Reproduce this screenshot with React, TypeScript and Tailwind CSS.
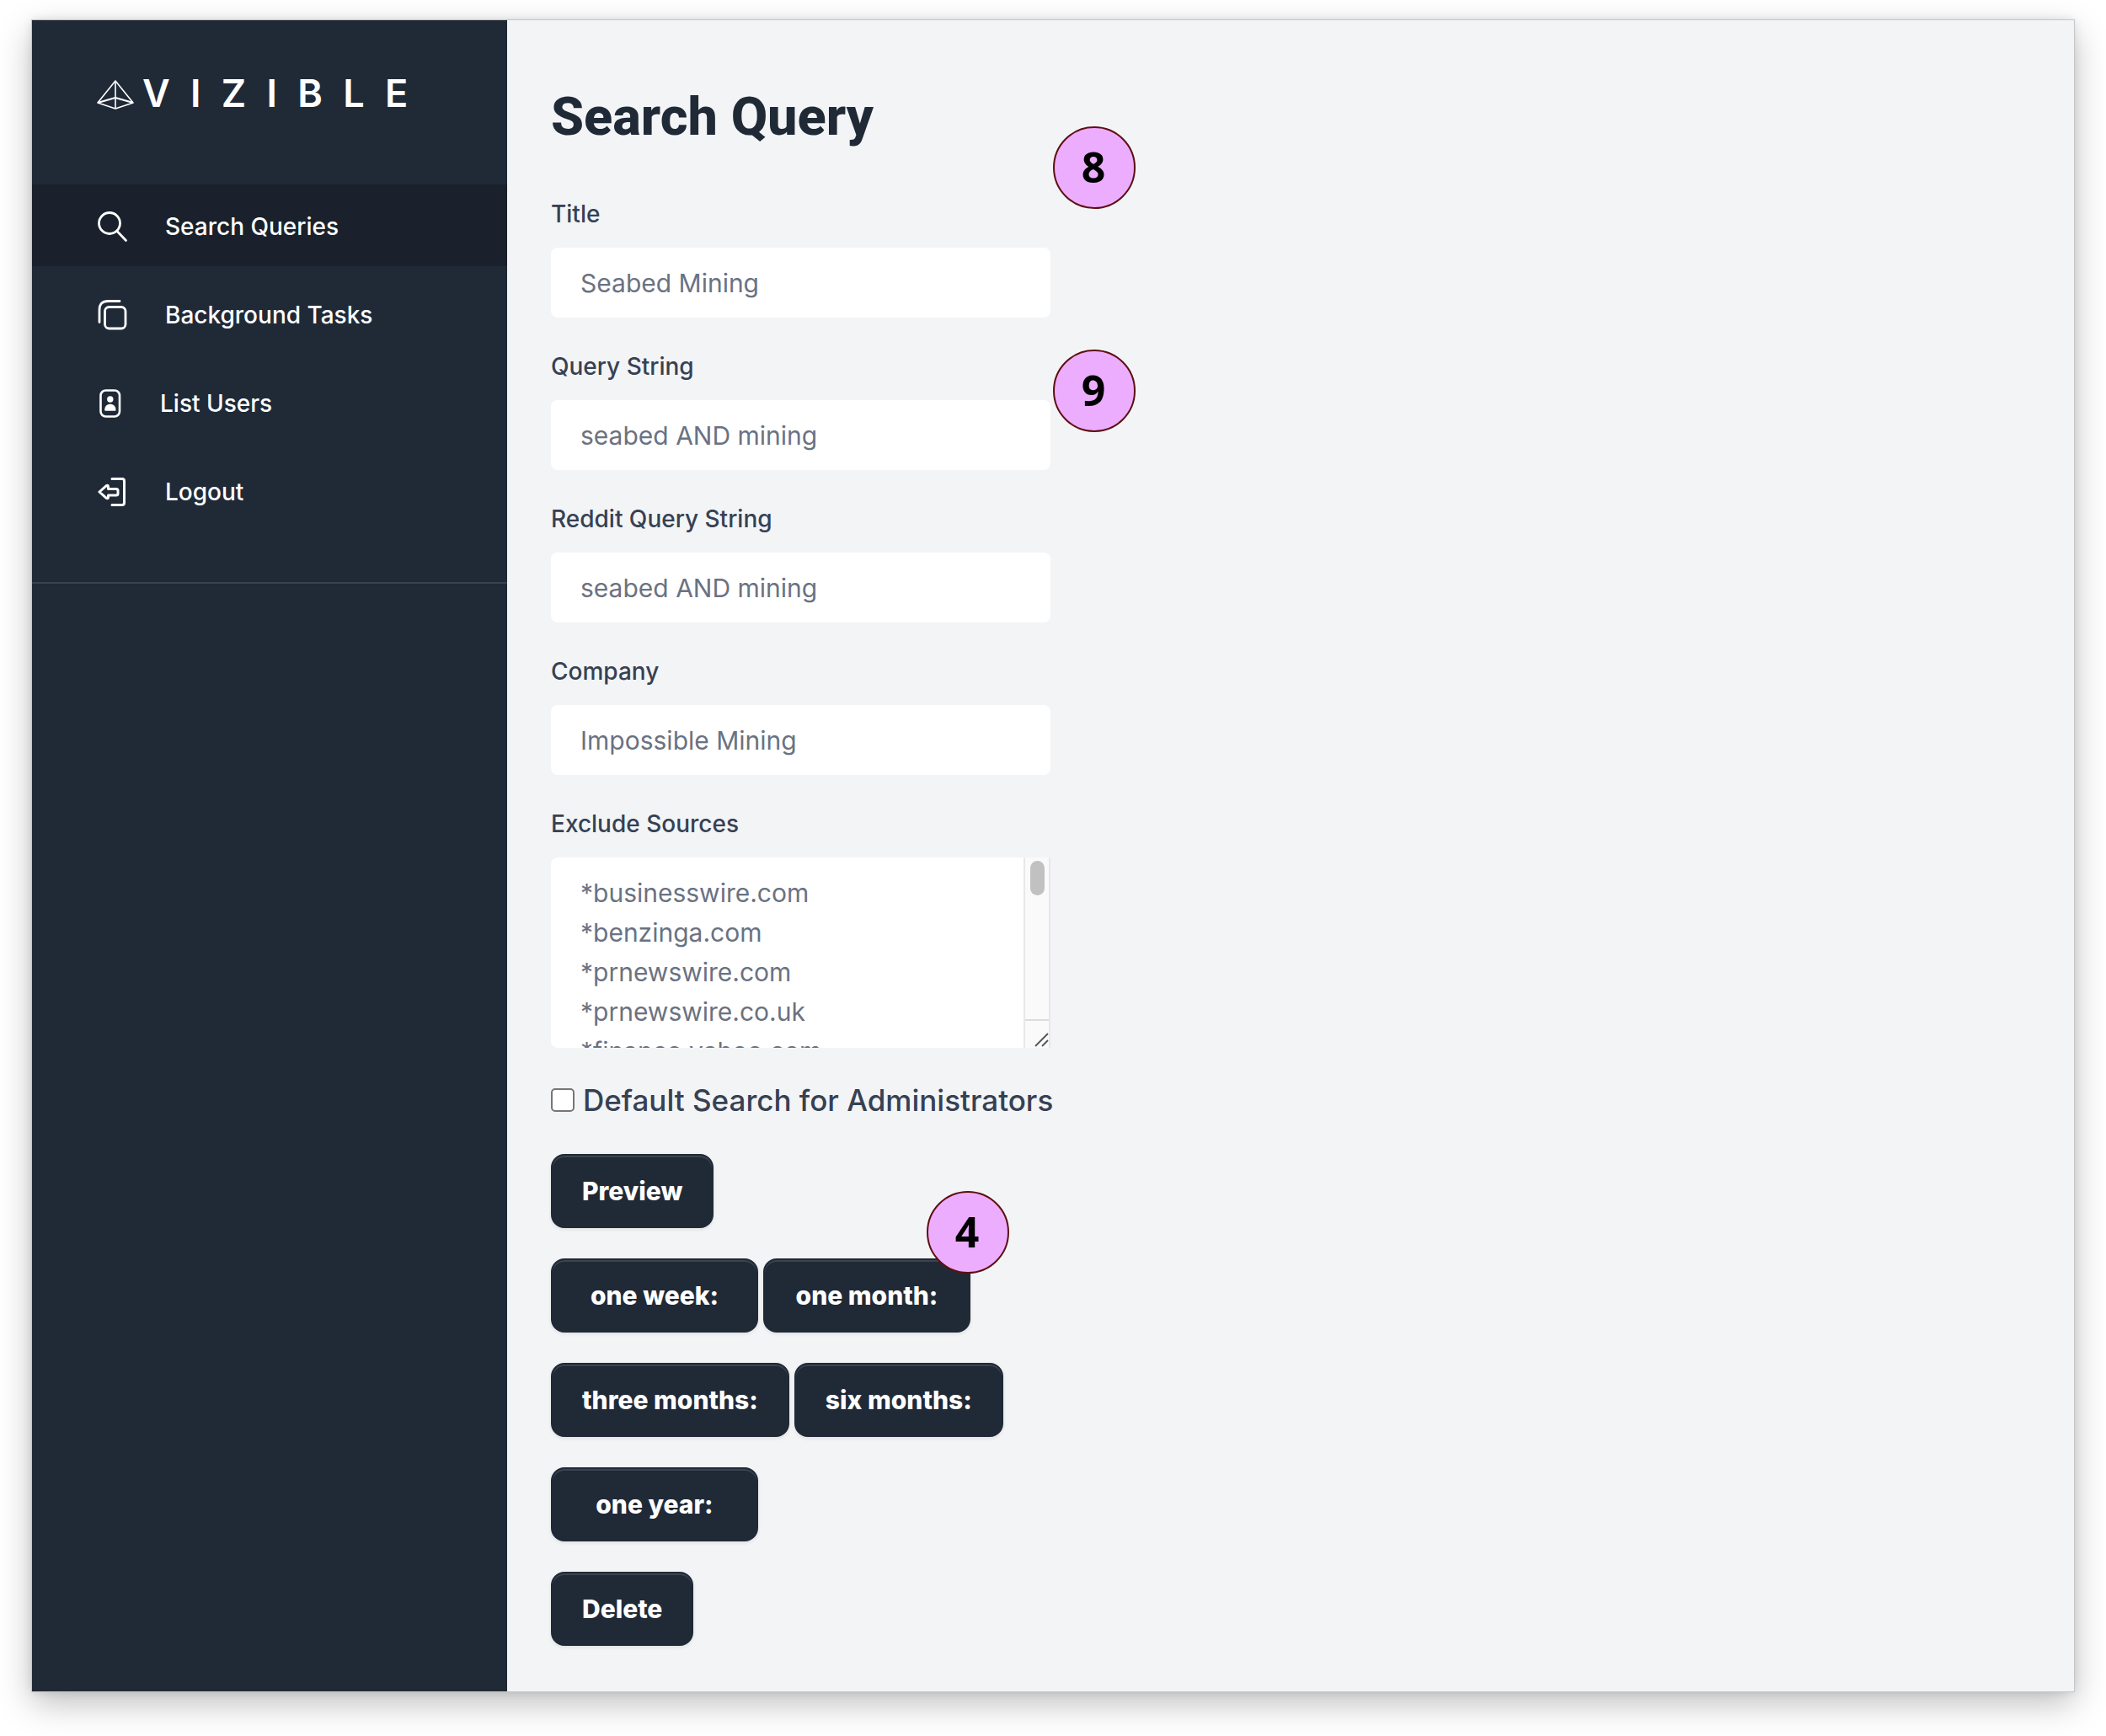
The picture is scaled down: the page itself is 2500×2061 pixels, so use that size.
import type { ReactNode } from "react";

function LogoMark() {
  return (
    <svg width="44" height="36" viewBox="0 0 44 36" fill="none" stroke="#fff" strokeWidth="1.6" strokeLinejoin="round" aria-hidden="true">
      <path d="M22 2 L1 28 L22 35 L43 28 Z" />
      <path d="M22 2 V35" />
      <path d="M1 28 L22 22 L43 28" strokeWidth="2" />
    </svg>
  );
}

function SearchIcon() {
  return (
    <svg width="36" height="38" viewBox="0 0 36 38" fill="none" stroke="#fff" strokeWidth="2.8" strokeLinecap="round" aria-hidden="true">
      <circle cx="14" cy="15" r="12.500" />
      <path d="M23 24.500 L33.500 35.500" />
    </svg>
  );
}

function TasksIcon() {
  return (
    <svg width="36" height="38" viewBox="0 0 36 38" fill="none" stroke="#fff" strokeWidth="2.8" strokeLinecap="round" aria-hidden="true">
      <path d="M2 27.5 V13 Q2 2.5 12.5 2.5 H26" />
      <rect x="8.500" y="9.500" width="24.500" height="25.500" rx="5" />
    </svg>
  );
}

function UsersIcon() {
  return (
    <svg width="30" height="36" viewBox="0 0 30 36" fill="none" aria-hidden="true">
      <rect x="3.500" y="2.500" width="22.500" height="31" rx="6" stroke="#fff" strokeWidth="2.6" />
      <circle cx="14.800" cy="13" r="3.700" fill="#fff" />
      <path d="M8.200 26 C8.200 21 11.200 18.800 14.800 18.800 C18.500 18.800 21.500 21 21.500 26 Q21.500 26.800 20.500 26.800 H9.200 Q8.200 26.800 8.200 26 Z" fill="#fff" />
    </svg>
  );
}

function LogoutIcon() {
  return (
    <svg width="36" height="36" viewBox="0 0 36 36" fill="none" stroke="#fff" strokeWidth="3" strokeLinecap="round" strokeLinejoin="round" aria-hidden="true">
      <path d="M17 2.500 H29 Q31.500 2.500 31.500 5 V31 Q31.500 33.500 29 33.500 H17" />
      <path d="M2 18 L10 10.800 Q12.500 9.500 12.500 12 V14.500 H22 Q24 14.500 24 16.500 V20 Q24 22 22 22 H12.500 V24.500 Q12.500 26.500 10 25.200 Z" />
    </svg>
  );
}

function NavItem({ icon, active, children }: { icon: ReactNode; active?: boolean; children: ReactNode }) {
  return (
    <a
      href="#"
      className={
        active
          ? "flex h-[97px] items-center gap-[44px] bg-[#1a212c] pl-[78px] pt-0.5 text-[28px] font-medium text-white"
          : "flex h-[97px] items-center gap-[44px] pl-[78px] pt-0.5 text-[28px] font-medium text-white"
      }
    >
      {icon}
      <span>{children}</span>
    </a>
  );
}

function Marker({ className, children }: { className: string; children: ReactNode }) {
  return (
    <span
      className={`absolute flex size-[98px] items-center justify-center rounded-full border-2 border-[#5e0f10] bg-[#ecadff] pr-0.5 pb-0.5 font-['Open_Sans',sans-serif] text-[50px] font-bold text-black ${className}`}
    >
      {children}
    </span>
  );
}

function Field({ id, label, value, children }: { id: string; label: string; value: string; children?: ReactNode }) {
  return (
    <div className="relative flex flex-col gap-5">
      <label htmlFor={id} className="text-[28px] leading-10 font-medium text-gray-700">
        {label}
      </label>
      <input
        id={id}
        type="text"
        defaultValue={value}
        className="h-[83px] w-full rounded-lg bg-white px-[35px] text-[30px] text-gray-500 outline-none"
      />
      {children}
    </div>
  );
}

function Button({ wide, children }: { wide?: boolean; children: ReactNode }) {
  return (
    <button
      type="button"
      className={
        wide
          ? "h-[88px] min-w-[246px] rounded-2xl border-2 border-[#202a37] bg-[#202a37] px-[35px] text-[30px] font-extrabold text-white shadow-[inset_0_2px_0_rgba(255,255,255,0.12),0_2px_4px_rgba(0,0,0,0.08)]"
          : "h-[88px] rounded-2xl border-2 border-[#202a37] bg-[#202a37] px-[35px] text-[30px] font-extrabold text-white shadow-[inset_0_2px_0_rgba(255,255,255,0.12),0_2px_4px_rgba(0,0,0,0.08)]"
      }
    >
      {children}
    </button>
  );
}

const excluded = ["*businesswire.com", "*benzinga.com", "*prnewswire.com", "*prnewswire.co.uk", "*finance.yahoo.com"].join("\n");

export default function App() {
  return (
    <div className="min-h-screen bg-white px-[38px] pt-6 pb-[53px] font-['Inter',sans-serif]">
      <div className="flex bg-gray-100 shadow-[0_0_0_1px_#c6c6c6,0_0_10px_rgba(0,0,0,0.12),0_14px_38px_rgba(0,0,0,0.26)]">
        <aside className="w-[564px] shrink-0 bg-[#202a37]">
          <a href="#" className="flex h-[195px] items-start gap-[10px] pt-[68px] pl-[77px] text-white">
            <span className="pt-0.5">
              <LogoMark />
            </span>
            <span className="text-[45px] leading-[38px] font-semibold tracking-[0.54em]">VIZIBLE</span>
          </a>
          <nav className="flex flex-col gap-2 border-b-2 border-[#384250] pb-[60px]">
            <NavItem active icon={<SearchIcon />}>Search Queries</NavItem>
            <NavItem icon={<TasksIcon />}>Background Tasks</NavItem>
            <NavItem icon={<UsersIcon />}>List Users</NavItem>
            <NavItem icon={<LogoutIcon />}>Logout</NavItem>
          </nav>
        </aside>

        <main className="min-w-0 flex-1 px-[52px] pt-[79px] pb-[54px]">
          <h1 className="mb-[59px] font-['Roboto',sans-serif] text-[63px] leading-[72px] font-extrabold text-[#202a37]">Search Query</h1>
          <form className="flex w-full max-w-[593px] flex-col">
            <div className="flex flex-col gap-[38px]">
              <Field id="title" label="Title" value="Seabed Mining">
                <Marker className="-top-[84px] left-[596px]">8</Marker>
              </Field>
              <Field id="query" label="Query String" value="seabed AND mining">
                <Marker className="top-0 left-[596px]">9</Marker>
              </Field>
              <Field id="reddit" label="Reddit Query String" value="seabed AND mining" />
              <Field id="company" label="Company" value="Impossible Mining" />
              <div className="flex flex-col gap-5">
                <label htmlFor="exclude" className="text-[28px] leading-10 font-medium text-gray-700">
                  Exclude Sources
                </label>
                <div className="relative">
                  <textarea
                    id="exclude"
                    defaultValue={excluded}
                    className="block h-[226px] w-full resize-none overflow-y-auto rounded-lg bg-white px-[35px] pt-[19px] text-[30px] leading-[47px] text-gray-500 outline-none [scrollbar-width:none]"
                  />
                  <div className="pointer-events-none absolute inset-y-0 right-0 flex w-8 flex-col justify-between border-x-2 border-[#e8e8e8] bg-[#fafafa]">
                    <span className="mt-1 ml-[6px] h-[41px] w-[17px] rounded-full bg-[#c1c1c1]" />
                    <span className="flex h-[34px] items-end justify-end border-t-2 border-[#dcdcdc]">
                      <svg width="18" height="20" viewBox="0 0 18 20" stroke="#555" strokeWidth="1.8" fill="none" aria-hidden="true">
                        <path d="M2 18 L17 3 M10 18 L17 11" />
                      </svg>
                    </span>
                  </div>
                </div>
              </div>
            </div>

            <label className="mt-[35px] flex h-[54px] items-center gap-[10px] text-[35px] font-medium whitespace-nowrap text-gray-700">
              <input type="checkbox" className="size-[28px] shrink-0 appearance-none rounded-[5px] border-2 border-[#767676] bg-white" />
              Default Search for Administrators
            </label>

            <div className="mt-[37px] flex flex-col items-start gap-9">
              <Button>Preview</Button>
              <div className="relative flex gap-[6px]">
                <Button wide>one week:</Button>
                <Button wide>one month:</Button>
                <Marker className="-top-[80px] left-[446px]">4</Marker>
              </div>
              <div className="flex gap-[6px]">
                <Button wide>three months:</Button>
                <Button wide>six months:</Button>
              </div>
              <Button wide>one year:</Button>
              <Button>Delete</Button>
            </div>
          </form>
        </main>
      </div>
    </div>
  );
}
